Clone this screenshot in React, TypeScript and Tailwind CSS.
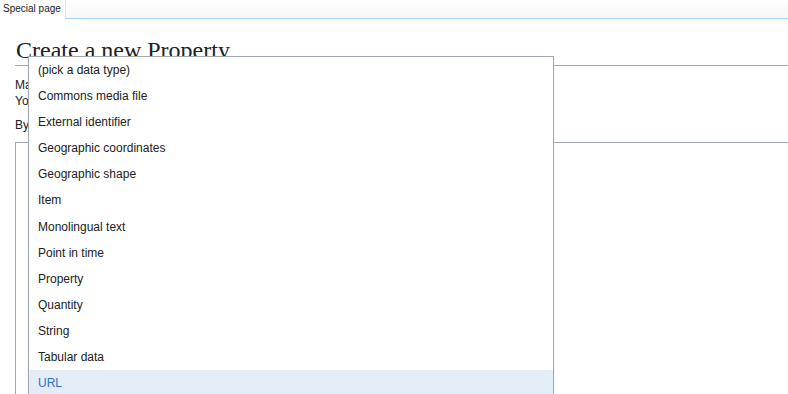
import React from 'react'

const dataTypes = [
  '(pick a data type)',
  'Commons media file',
  'External identifier',
  'Geographic coordinates',
  'Geographic shape',
  'Item',
  'Monolingual text',
  'Point in time',
  'Property',
  'Quantity',
  'String',
  'Tabular data',
  'URL',
]

const App: React.FC = () => {
  const highlighted = 'URL'

  return (
    <div className="relative w-[788px] h-[394px] overflow-hidden bg-white text-[#202122] font-['Liberation_Sans',Arial,sans-serif]">
      {/* tab bar */}
      <div className="flex h-[19px] bg-gradient-to-b from-white to-[#f6f6f6]">
        <div className="w-[65px] bg-white pl-[3px] pt-[2px] whitespace-nowrap text-[10px] leading-[14px] text-[#202122]">Special page</div>
        <div className="flex-1 border-l border-[#e6e6e6] border-b border-b-[#a7d7f9]" />
      </div>

      <div className="pl-[15px]">
        <h1 className="mt-[17px] pl-[1px] pb-[1px] border-b border-[#a2a9b1] font-['Liberation_Serif',Georgia,serif] text-[24px] leading-[28px]">
          Create a new Property
        </h1>
        <div className="mt-[11px] text-[12px] leading-[16px] whitespace-nowrap">
          <p>Make sure to check the existing properties first.</p>
          <p>You should enter a label and a description for the new property.</p>
          <p className="mt-[8px]">By clicking "Create", you agree to the terms of use.</p>
        </div>
        <div className="mt-[9px] h-[300px] border-l border-t border-[#a2a9b1]" />
      </div>

      {/* open dropdown */}
      <ul className="absolute left-[28px] top-[56px] w-[526px] border border-[#a2a9b1] bg-white text-[12px] shadow-[0_2px_2px_rgba(0,0,0,0.1)]">
        {dataTypes.map((t) => (
          <li
            key={t}
            className={`h-[26.1px] pl-[9px] leading-[26px] ${t === highlighted ? 'bg-[#e3edf8] text-[#2f6fc8]' : 'text-[#202122]'}`}
          >
            {t}
          </li>
        ))}
      </ul>
    </div>
  )
}

export default App
